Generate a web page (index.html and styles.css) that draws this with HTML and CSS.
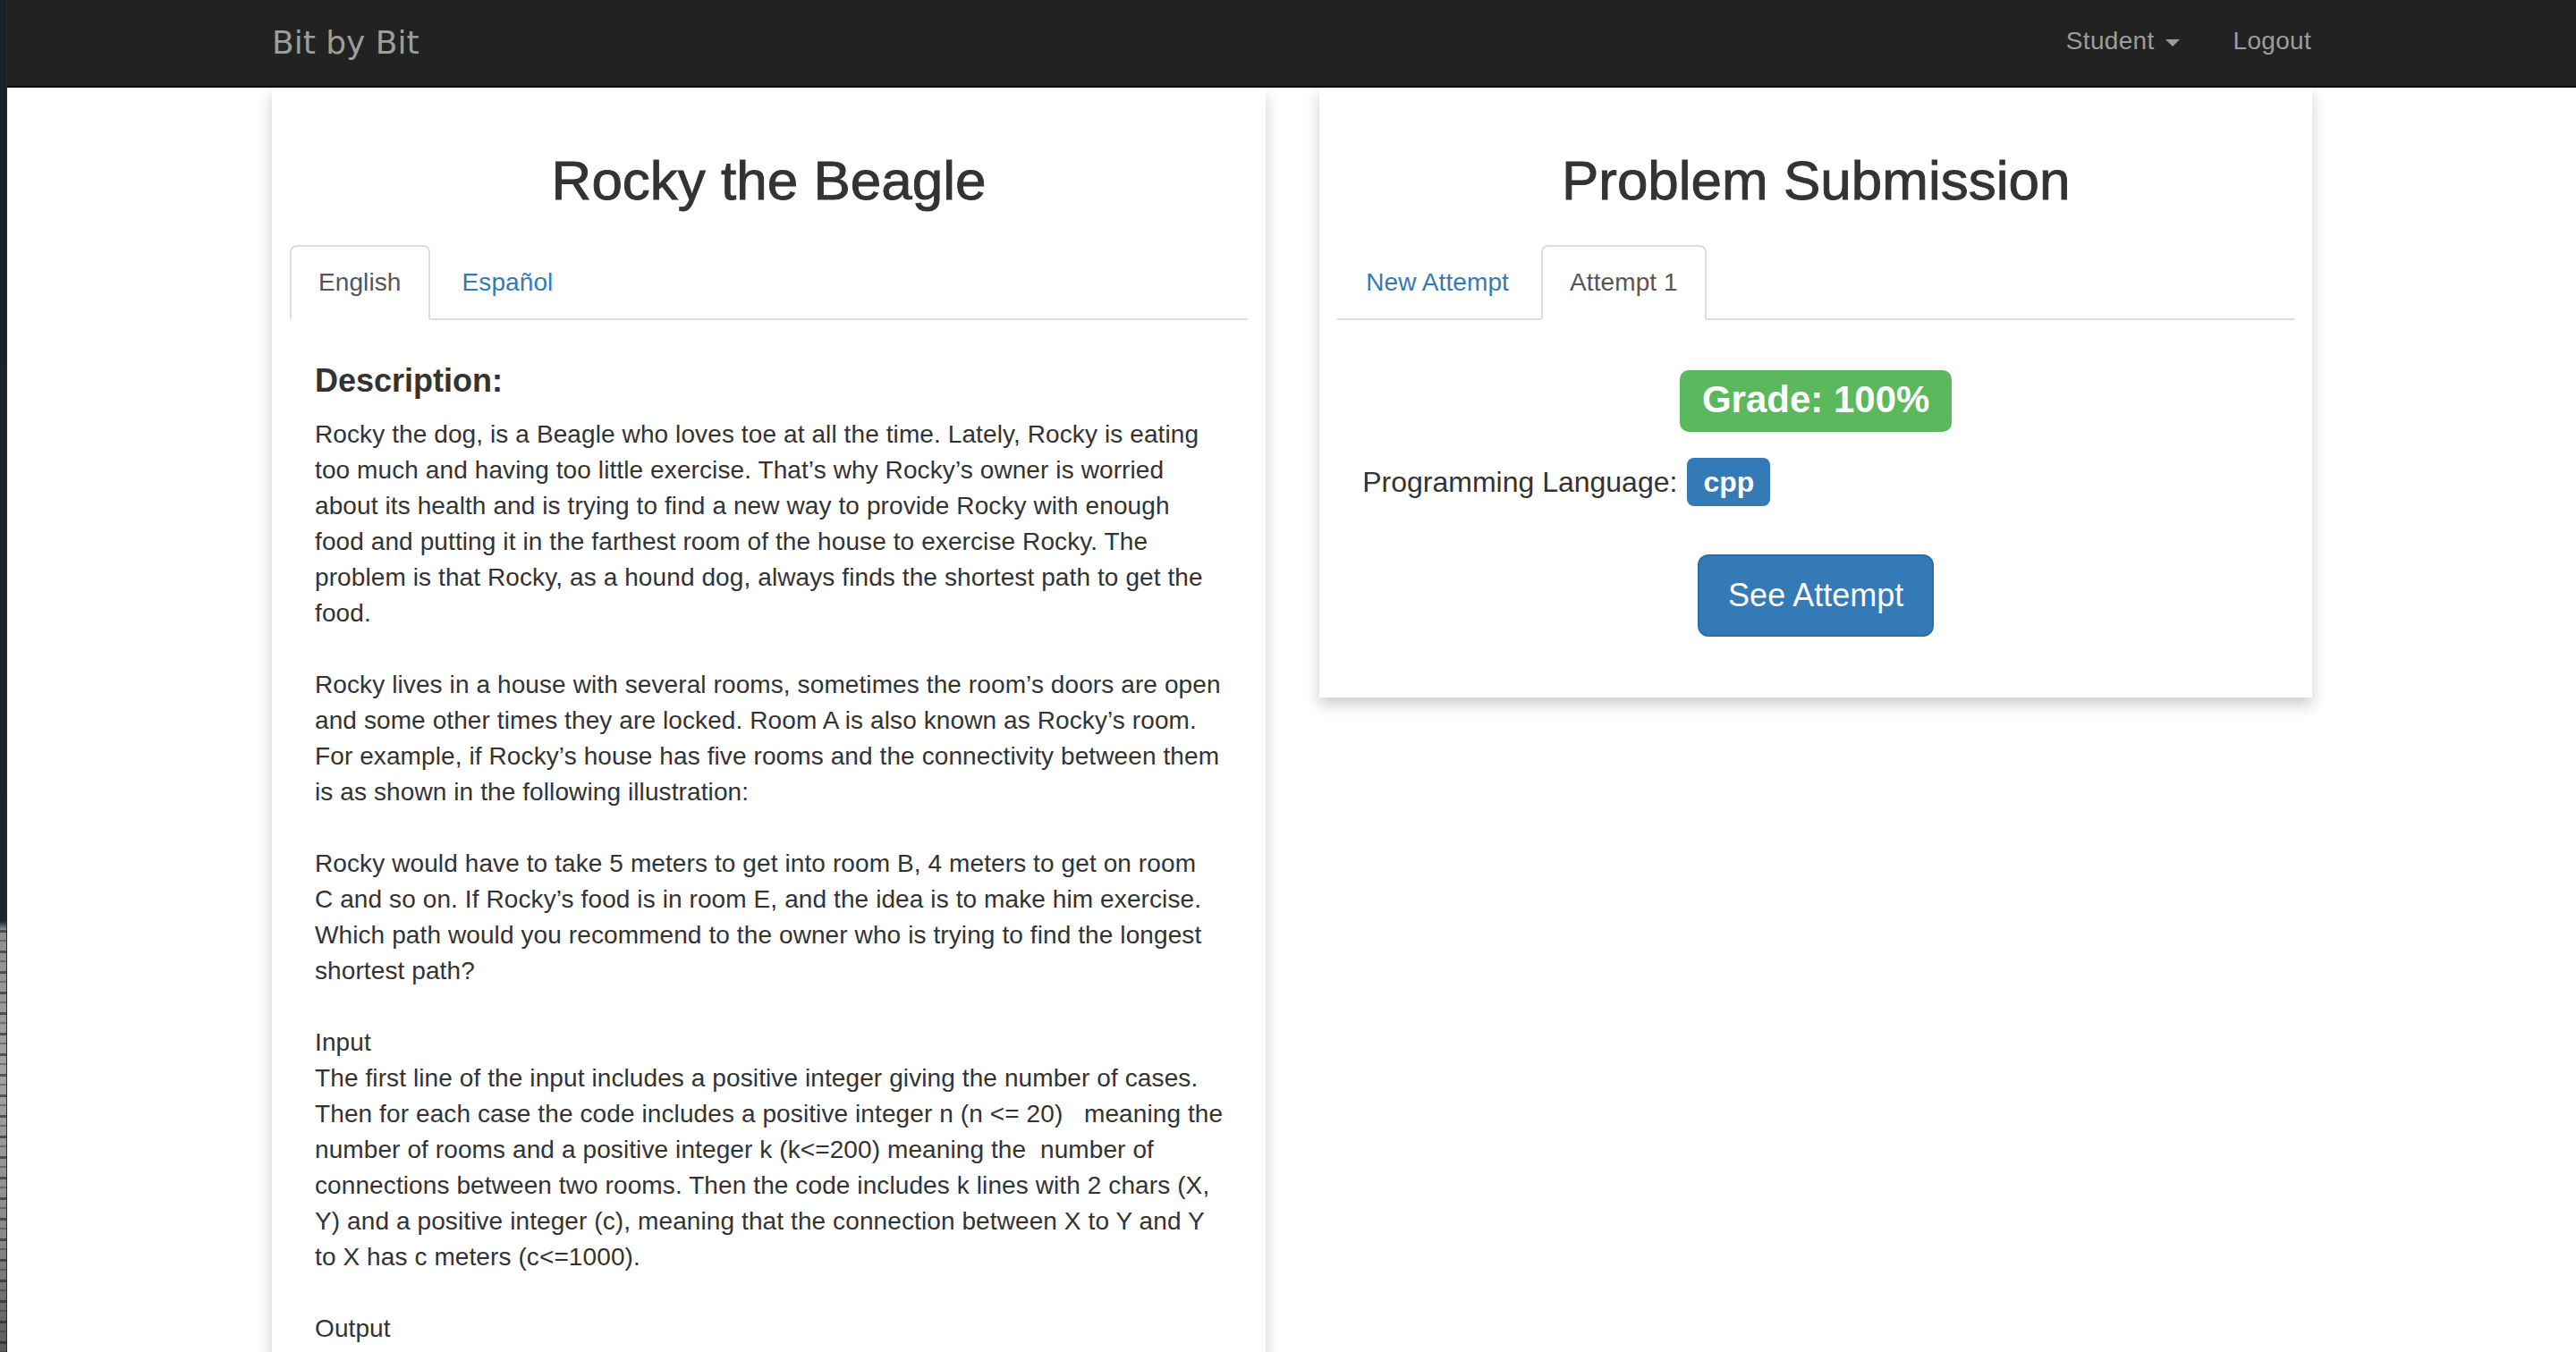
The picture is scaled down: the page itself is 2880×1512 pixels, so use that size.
FILE: index.html
```html
<!DOCTYPE html>
<html lang="en">
<head>
<meta charset="utf-8">
<title>Bit by Bit</title>
<link rel="stylesheet" href="styles.css">
</head>
<body>
<div class="window">
  <div class="desktop-strip"></div>
  <div class="page">
    <nav class="navbar">
      <div class="container nav-inner">
        <a class="brand" href="#">Bit by Bit</a>
        <ul class="nav-right">
          <li><a href="#">Student <span class="caret"></span></a></li>
          <li><a href="#">Logout</a></li>
        </ul>
      </div>
    </nav>
    <main class="container">
      <div class="row">
        <section class="col">
          <div class="card">
            <h2 class="card-title">Rocky the Beagle</h2>
            <ul class="tabs">
              <li class="active"><a href="#">English</a></li>
              <li><a href="#">Español</a></li>
            </ul>
            <div class="tab-content description">
              <h4 class="desc-title">Description:</h4>
              <p>Rocky the dog, is a Beagle who loves toe at all the time. Lately, Rocky is eating<br>too much and having too little exercise. That’s why Rocky’s owner is worried<br>about its health and is trying to find a new way to provide Rocky with enough<br>food and putting it in the farthest room of the house to exercise Rocky. The<br>problem is that Rocky, as a hound dog, always finds the shortest path to get the<br>food.</p>
              <p>Rocky lives in a house with several rooms, sometimes the room’s doors are open<br>and some other times they are locked. Room A is also known as Rocky’s room.<br>For example, if Rocky’s house has five rooms and the connectivity between them<br>is as shown in the following illustration:</p>
              <p>Rocky would have to take 5 meters to get into room B, 4 meters to get on room<br>C and so on. If Rocky’s food is in room E, and the idea is to make him exercise.<br>Which path would you recommend to the owner who is trying to find the longest<br>shortest path?</p>
              <p>Input<br>The first line of the input includes a positive integer giving the number of cases.<br>Then for each case the code includes a positive integer n (n &lt;= 20) &nbsp; meaning the<br>number of rooms and a positive integer k (k&lt;=200) meaning the &nbsp;number of<br>connections between two rooms. Then the code includes k lines with 2 chars (X,<br>Y) and a positive integer (c), meaning that the connection between X to Y and Y<br>to X has c meters (c&lt;=1000).</p>
              <p>Output</p>
            </div>
          </div>
        </section>
        <section class="col">
          <div class="card">
            <h2 class="card-title">Problem Submission</h2>
            <ul class="tabs">
              <li><a href="#">New Attempt</a></li>
              <li class="active"><a href="#">Attempt 1</a></li>
            </ul>
            <div class="tab-content submission">
              <div class="grade-wrap"><span class="grade">Grade: 100%</span></div>
              <div class="lang-row">
                <span class="lang-text">Programming Language:</span>
                <span class="lang-label">cpp</span>
              </div>
              <div class="btn-wrap"><a class="btn" href="#">See Attempt</a></div>
            </div>
          </div>
        </section>
      </div>
    </main>
  </div>
</div>
</body>
</html>
```

FILE: styles.css
```css
* { box-sizing: border-box; }

html, body {
  margin: 0;
  padding: 0;
  height: 100%;
  overflow: hidden;
  background: #fff;
}

body {
  font-family: "Liberation Sans", Arial, Helvetica, sans-serif;
  font-size: 28px;
  line-height: 40px;
  color: #333;
}

a { text-decoration: none; }

.window {
  display: flex;
  height: 1512px;
  overflow: hidden;
}

.desktop-strip {
  flex: 0 0 8px;
  background:
    repeating-linear-gradient(to bottom, rgba(20,20,20,0.55) 0 3px, transparent 3px 11px, rgba(30,30,30,0.35) 11px 13px, transparent 13px 23px) 0 1040px / 100% 100% no-repeat,
    linear-gradient(to bottom, #1a2127 0, #1c252b 1030px, #8f8f8f 1040px, #a3a3a3 1200px, #8a8a8a 1380px, #5a5a5a 1512px);
  border-right: 1px solid #2a2a2a;
}

.page {
  flex: 1 1 auto;
  min-width: 0;
}

.container {
  width: 2340px;
  margin: 0 auto;
  padding: 0 30px;
}

/* Navbar */
.navbar {
  height: 98px;
  background: #222;
  border-bottom: 2px solid #080808;
}

.nav-inner {
  display: flex;
  justify-content: space-between;
  align-items: flex-start;
  height: 96px;
}

.brand {
  font-family: "DejaVu Sans", Verdana, sans-serif;
  font-size: 36px;
  line-height: 96px;
  color: #9d9d9d;
  margin-left: -30px;
  padding: 0 30px;
}

.nav-right {
  display: flex;
  list-style: none;
  margin: 0 -30px 0 0;
  padding: 0;
}

.nav-right a {
  display: block;
  padding: 26px 30px;
  line-height: 40px;
  font-size: 28px;
  letter-spacing: 0.3px;
  color: #9d9d9d;
}

.caret {
  display: inline-block;
  width: 0;
  height: 0;
  margin-left: 4px;
  vertical-align: middle;
  border-top: 8px solid #9d9d9d;
  border-left: 8px solid transparent;
  border-right: 8px solid transparent;
}

/* Layout */
.row {
  display: flex;
  align-items: flex-start;
  margin: 0 -30px;
}

.col {
  flex: 0 0 50%;
  padding: 0 30px;
}

.card {
  display: flow-root;
  background: #fff;
  padding: 0 20px;
  box-shadow: 0 8px 16px 0 rgba(0, 0, 0, 0.2);
}

.card-title {
  margin: 70px 0 38px;
  font-size: 62px;
  line-height: 68px;
  font-weight: 400;
  -webkit-text-stroke: 0.9px #333;
  text-align: center;
  color: #333;
}

/* Tabs */
.tabs {
  display: flex;
  list-style: none;
  margin: 0;
  padding: 0;
  border-bottom: 2px solid #ddd;
}

.tabs li {
  margin-bottom: -2px;
}

.tabs a {
  display: block;
  padding: 20px 30px;
  margin-right: 4px;
  line-height: 40px;
  font-size: 28px;
  letter-spacing: 0.1px;
  color: #337ab7;
  border: 2px solid transparent;
  border-radius: 8px 8px 0 0;
}

.tabs .active a {
  color: #555;
  background: #fff;
  border-color: #ddd #ddd transparent;
}

.tab-content {
  padding: 0 28px;
}

.description {
  padding-bottom: 200px;
}

.desc-title {
  margin: 48px 0 20px;
  font-size: 36px;
  line-height: 40px;
  font-weight: 700;
}

.tab-content p {
  margin: 0 0 40px;
  white-space: nowrap;
  letter-spacing: 0.1px;
}

/* Submission */
.submission {
  padding-top: 56px;
  padding-bottom: 68px;
}

.grade-wrap {
  text-align: center;
}

.grade {
  display: inline-block;
  background: #5cb85c;
  color: #fff;
  font-weight: 700;
  font-size: 42px;
  line-height: 42px;
  padding: 12px 25px 15px;
  border-radius: 10px;
}

.lang-row {
  display: flex;
  align-items: center;
  gap: 11px;
  margin-top: 29px;
  font-size: 32px;
  line-height: 40px;
}

.lang-label {
  background: #337ab7;
  color: #fff;
  font-weight: 700;
  font-size: 32px;
  line-height: 32px;
  padding: 11px 18px;
  border-radius: 8px;
}

.btn-wrap {
  margin-top: 54px;
  text-align: center;
}

.btn {
  display: inline-block;
  font-size: 36px;
  line-height: 48px;
  padding: 20px 32px;
  color: #fff;
  background: #337ab7;
  border: 2px solid #2e6da4;
  border-radius: 12px;
}
```
